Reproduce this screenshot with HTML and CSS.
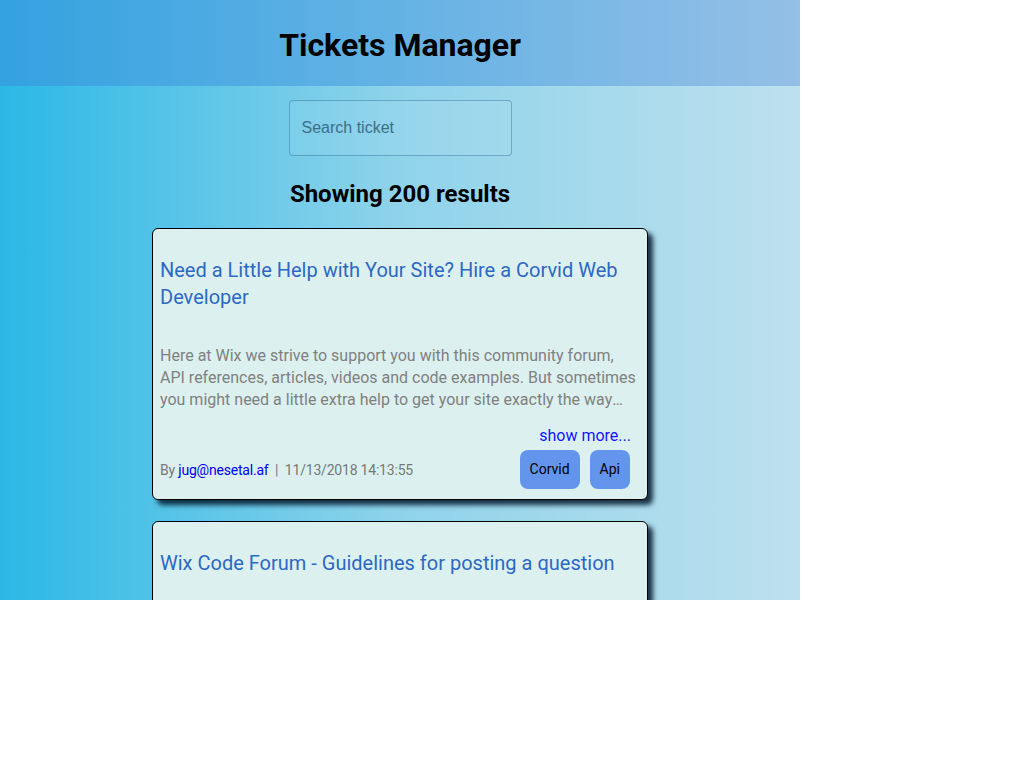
FILE: index.html
```html
<!DOCTYPE html>
<html lang="en">
<head>
<meta charset="utf-8">
<title>Tickets Manager</title>
<link rel="stylesheet" href="styles.css">
</head>
<body>
<div class="app">
  <header class="app-header">
    <h1 class="app-title">Tickets Manager</h1>
  </header>
  <main class="app-main">
    <input class="search" type="search" placeholder="Search ticket">
    <h2 class="results">Showing 200 results</h2>
    <ul class="tickets">
      <li class="ticket">
        <h5 class="ticket-title">Need a Little Help with Your Site? Hire a Corvid Web Developer</h5>
        <p class="ticket-content">Here at Wix we strive to support you with this community forum, API references, articles, videos and code examples. But sometimes you might need a little extra help to get your site exactly the way you want it. That's where our Corvid web developers come in.</p>
        <div class="show-more">show more...</div>
        <footer class="ticket-footer">
          <div class="meta">By <a class="email" href="#">jug@nesetal.af</a> &nbsp;|&nbsp; 11/13/2018 14:13:55</div>
          <div class="labels">
            <span class="label">Corvid</span>
            <span class="label">Api</span>
          </div>
        </footer>
      </li>
      <li class="ticket">
        <h5 class="ticket-title">Wix Code Forum - Guidelines for posting a question</h5>
        <p class="ticket-content">Hello everyone, welcome to the Wix Code forum. Please read these guidelines before posting a question so that we can help you as quickly as possible.</p>
      </li>
    </ul>
  </main>
</div>
</body>
</html>
```
FILE: styles.css
```css
html, body {
  margin: 0;
  padding: 0;
  background: #ffffff;
}

.app {
  width: 800px;
  height: 600px;
  overflow: hidden;
  display: flex;
  flex-direction: column;
  font-family: "Segoe UI", Roboto, "Noto Sans", sans-serif;
  background: linear-gradient(to right, #2bb8e6 0%, #8fd3ea 50%, #bde0ee 100%);
}

.app-header {
  height: 86px;
  box-sizing: border-box;
  padding-top: 4px;
  flex: none;
  display: flex;
  align-items: center;
  justify-content: center;
  background: linear-gradient(to right, #33a2e0 0%, #60b1e4 45%, #94bfe6 100%);
}

.app-title {
  margin: 0;
  font-size: 32px;
  font-weight: 700;
  color: #000;
}

.app-main {
  display: flex;
  flex-direction: column;
  align-items: center;
}

.search {
  margin-top: 14px;
  width: 223px;
  height: 56px;
  box-sizing: border-box;
  padding: 0 12px;
  border: 1px solid rgba(20, 80, 130, 0.35);
  border-radius: 4px;
  background: rgba(255, 255, 255, 0.06);
  font-family: "Liberation Sans", Arial, sans-serif;
  font-size: 16px;
  color: #1d4c66;
  outline: none;
}

.search::placeholder {
  color: #3b6e8a;
}

.results {
  margin: 22px 0 18px;
  height: 32px;
  line-height: 32px;
  font-size: 24px;
  font-weight: 700;
  color: #000;
}

.tickets {
  list-style: none;
  margin: 0;
  padding: 0;
  width: 496px;
  display: flex;
  flex-direction: column;
  gap: 21px;
}

.ticket {
  box-sizing: border-box;
  border: 1px solid #000;
  border-radius: 6px;
  background: #dcf1ef;
  padding: 28px 6px 10px 7px;
  box-shadow: 5px 5px 5px rgba(0, 20, 40, 0.85);
}

.ticket-title {
  margin: 0 10px 0 0;
  font-size: 20px;
  line-height: 27px;
  font-weight: 400;
  color: #2c68c4;
}

.ticket-content {
  margin: 34px 0 0;
  font-size: 16px;
  line-height: 22px;
  color: #808080;
  display: -webkit-box;
  -webkit-line-clamp: 3;
  -webkit-box-orient: vertical;
  overflow: hidden;
}

.show-more {
  margin: 14px 10px 0 0;
  text-align: right;
  font-size: 16px;
  line-height: 22px;
  color: #1414ff;
}

.ticket-footer {
  margin: 3px 10px 0 0;
  display: flex;
  align-items: center;
  justify-content: space-between;
}

.meta {
  font-size: 14px;
  letter-spacing: -0.2px;
  color: #777;
}

.email {
  color: #0000ee;
  text-decoration: none;
}

.labels {
  display: flex;
  gap: 10px;
  margin-right: 1px;
}

.label {
  background: #6495ed;
  border-radius: 8px;
  padding: 0 10px;
  height: 39px;
  line-height: 39px;
  font-size: 14px;
  color: #000;
}
```
